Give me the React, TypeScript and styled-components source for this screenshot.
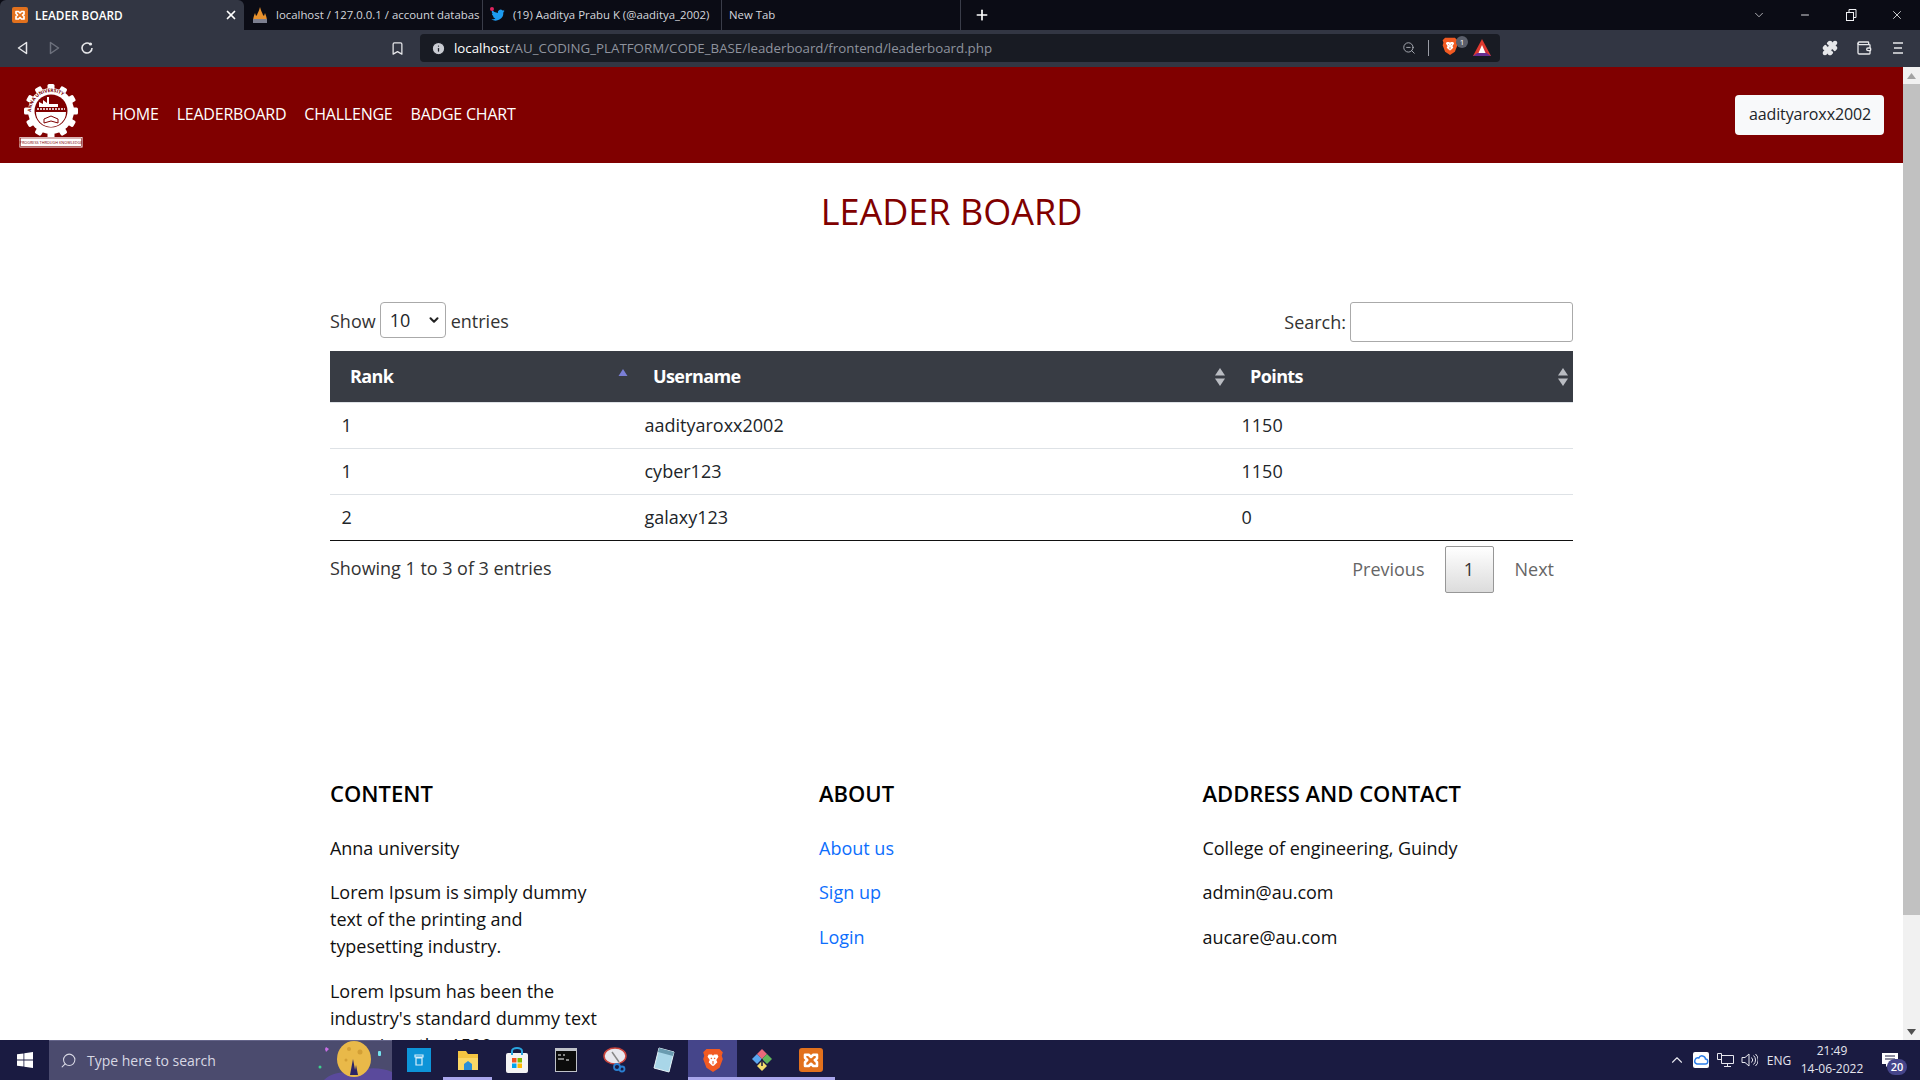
import React from 'react';
import styled, { createGlobalStyle } from 'styled-components';
import { ChevronDown, ChevronUp, Minus, X, Plus, Bookmark, ZoomOut, Puzzle, Wallet, Search, Info } from 'lucide-react';

const GlobalStyle = createGlobalStyle`
  html, body {
    margin: 0;
    padding: 0;
    overflow: hidden;
    background: #fff;
  }
  * { box-sizing: border-box; }
`;

const Screen = styled.div`
  width: 1920px;
  height: 1080px;
  display: flex;
  flex-direction: column;
  overflow: hidden;
  font-family: 'Open Sans', sans-serif;
`;

/* browser chrome */
const TabStrip = styled.div`
  height: 30px;
  flex: none;
  display: flex;
  align-items: stretch;
  background: #0b0c15;
  color: #d6d8de;
  font-family: 'Open Sans', sans-serif;
`;

const BrowserTab = styled.div<{ active?: boolean }>`
  width: ${p => (p.active ? 244 : 239)}px;
  display: flex;
  align-items: center;
  gap: 7px;
  padding: 0 6px 1px ${p => (p.active ? 12 : 7)}px;
  font-size: ${p => (p.active ? 11.8 : 11.4)}px;
  font-weight: ${p => (p.active ? 600 : 400)};
  color: ${p => (p.active ? '#fff' : '#d4d6dc')};
  background: ${p => (p.active ? '#323643' : 'transparent')};
  border-radius: ${p => (p.active ? '6px 6px 0 0' : '0')};
  border-right: ${p => (p.active ? 'none' : '1px solid #3a3d49')};
  white-space: nowrap;
  overflow: hidden;

  svg {
    flex: none;
  }
`;

const TabTitle = styled.span`
  flex: 1;
  white-space: nowrap;
`;

const NewTab = styled.div`
  width: 42px;
  display: flex;
  align-items: center;
  justify-content: center;
  color: #fff;
`;

const WindowControls = styled.div`
  margin-left: auto;
  display: flex;
  align-items: center;
  color: #f0f1f4;
`;

const WindowButton = styled.div`
  width: 46px;
  display: flex;
  justify-content: center;
`;

const Toolbar = styled.div`
  height: 37px;
  flex: none;
  display: flex;
  align-items: center;
  background: #323643;
  color: #e6e7ea;
  padding: 0 0 1px 15px;
`;

const NavIcons = styled.div`
  width: 375px;
  display: flex;
  align-items: center;
  gap: 15px;
`;

const BookmarkSlot = styled.div`
  width: 30px;
  display: flex;
  align-items: center;
`;

const UrlBar = styled.div`
  width: 1080px;
  height: 28px;
  background: #181b23;
  border-radius: 4px;
  display: flex;
  align-items: center;
  padding: 0 9px 0 11px;
  font-size: 13.3px;
  color: #8f939e;
`;

const UrlText = styled.span`
  margin-left: 8px;
  flex: 1;
  white-space: nowrap;
`;

const UrlHost = styled.span`
  color: #fff;
`;

const UrlDivider = styled.div`
  width: 1px;
  height: 16px;
  background: #9a9da6;
  margin: 0 12px 0 12px;
`;

const ShieldWrap = styled.div`
  position: relative;
  width: 22px;
  height: 22px;
  margin-right: 10px;
`;

const ShieldBadge = styled.span`
  position: absolute;
  top: -1px;
  right: -5px;
  width: 12px;
  height: 12px;
  border-radius: 50%;
  background: #5b5f6b;
  color: #fff;
  font-size: 8px;
  line-height: 12px;
  text-align: center;
`;

const ToolbarRight = styled.div`
  margin-left: auto;
  display: flex;
  align-items: center;
  gap: 18px;
  padding-right: 16px;
`;

const WalletGap = styled.div`
  display: flex;
  margin-right: 2px;
`;

/* page */
const Viewport = styled.div`
  flex: 1;
  min-height: 0;
  display: flex;
`;

const Page = styled.div`
  flex: 1;
  min-width: 0;
  overflow: hidden;
  background: #fff;
  color: #212529;
`;

const ScrollBar = styled.div`
  width: 17px;
  flex: none;
  background: #f1f1f1;
  display: flex;
  flex-direction: column;
  align-items: center;
`;

const ScrollArrow = styled.div`
  height: 17px;
  flex: none;
  display: flex;
  align-items: center;
  justify-content: center;
`;

const ScrollThumb = styled.div`
  width: 100%;
  height: 831px;
  background: #c1c1c1;
`;

const ScrollTrack = styled.div`
  flex: 1;
`;

const NavBar = styled.nav`
  height: 96px;
  background: #800000;
  display: flex;
  align-items: center;
  padding: 0 19px;
`;

const LogoSlot = styled.div`
  width: 64px;
  height: 64px;
  margin-right: 29px;
  margin-top: 1px;
`;

const NavLinks = styled.div`
  display: flex;
  gap: 18px;
  margin-top: -2px;
`;

const NavLink = styled.a`
  color: #fff;
  font-size: 16px;
  line-height: 24px;
  letter-spacing: -0.22px;
  white-space: nowrap;
`;

const UserButton = styled.button`
  margin-left: auto;
  width: 149px;
  height: 40px;
  background: #f8f9fa;
  border: none;
  border-radius: 4px;
  color: #212529;
  font-family: inherit;
  font-size: 16px;
  letter-spacing: -0.1px;
  padding: 0 0 2px 1px;
`;

const PageTitle = styled.h1`
  margin: 0;
  padding-top: 28px;
  height: 139px;
  text-align: center;
  font-size: 36px;
  line-height: 42px;
  font-weight: 400;
  color: #800000;
`;

const Container = styled.div`
  width: 1243px;
  margin-left: 330px;
`;

const TableControls = styled.div`
  height: 49px;
  display: flex;
  justify-content: space-between;
  align-items: flex-start;
  font-size: 18px;
  color: #333;
`;

const ShowEntries = styled.label`
  display: flex;
  align-items: center;
  gap: 4px;
  height: 36px;
  padding-top: 1px;
`;

const EntriesSelect = styled.div`
  width: 66px;
  height: 36px;
  margin: -1px 1px 0 0;
  border: 1px solid #aaa;
  border-radius: 4px;
  display: flex;
  align-items: center;
  justify-content: space-between;
  padding: 0 4px 0 9px;
  font-size: 18px;
  color: #212529;
`;

const SearchLabel = styled.label`
  display: flex;
  align-items: center;
  gap: 4px;
  height: 40px;
`;

const SearchInput = styled.input`
  width: 223px;
  height: 40px;
  border: 1px solid #aaa;
  border-radius: 3px;
  background: #fff;
`;

const Table = styled.table`
  width: 100%;
  border-collapse: collapse;
  table-layout: fixed;
  border-bottom: 1px solid #111;
`;

const HeadCell = styled.th<{ w: number }>`
  width: ${p => p.w}px;
  height: 51px;
  position: relative;
  padding: 0 0 1px 20px;
  background: #383c44;
  border-bottom: 1px solid #dee2e6;
  color: #fff;
  text-align: left;
  font-size: 18px;
  font-weight: 700;
  letter-spacing: -0.6px;
`;

const SortIcon = styled.span`
  position: absolute;
  top: 17px;
  right: 5px;
  display: block;
  line-height: 0;
`;

const Cell = styled.td`
  height: 46px;
  padding: 0 11.5px;
  font-size: 18px;
  color: #212529;
`;

const Row = styled.tr`
  & + & td {
    border-top: 1px solid #dee2e6;
  }
`;

const TableFooter = styled.div`
  display: flex;
  justify-content: space-between;
  padding-top: 5px;
  font-size: 18px;
  color: #333;
`;

const EntryCount = styled.div`
  padding-top: 9px;
  line-height: 27px;
  letter-spacing: -0.03px;
`;

const Pager = styled.div`
  display: flex;
  align-items: center;
  height: 47px;
`;

const PagerLink = styled.span<{ muted?: boolean }>`
  padding: 0 ${p => (p.muted ? 20 : 19)}px 0 ${p => (p.muted ? 0 : 21)}px;
  color: #666;
`;

const PagerCurrent = styled.span`
  width: 49px;
  height: 47px;
  border: 1px solid #979797;
  border-radius: 2px;
  background: linear-gradient(to bottom, #fff 0%, #dcdcdc 100%);
  display: flex;
  align-items: center;
  justify-content: center;
  color: #333;
`;

const Footer = styled.footer`
  display: grid;
  grid-template-columns: 489px 383.5px 1fr;
  margin-top: 184px;
`;

const FooterColumn = styled.div`
  display: flex;
  flex-direction: column;
`;

const FooterHeading = styled.h4`
  margin: 0 0 25px;
  font-size: 22px;
  line-height: 33px;
  font-weight: 600;
  color: #000;
`;

const FooterText = styled.p`
  margin: 0 0 17.5px;
  width: 290px;
  font-size: 18px;
  line-height: 27px;
  letter-spacing: -0.03px;
  color: #111;
`;

const FooterLink = styled.a`
  margin-bottom: 17.5px;
  font-size: 18px;
  line-height: 27px;
  color: #0d6efd;
`;

/* windows taskbar */
const Taskbar = styled.div`
  height: 40px;
  flex: none;
  display: flex;
  align-items: stretch;
  background: #1a1b41;
  color: #e8e8f0;
`;

const StartButton = styled.div`
  width: 49px;
  display: flex;
  align-items: center;
  justify-content: center;
`;

const SearchBox = styled.div`
  width: 343px;
  position: relative;
  display: flex;
  align-items: center;
  gap: 10px;
  padding-left: 11px;
  background: #4b4b6e;
  border-top: 1px solid #65658a;
  font-size: 14px;
  color: #d8d8e4;
  overflow: hidden;
`;

const MoonArt = styled.div`
  position: absolute;
  right: 0;
  bottom: 0;
  line-height: 0;
`;

const TaskIcons = styled.div`
  display: flex;
  align-items: stretch;
  margin-left: 2px;
`;

const TaskIcon = styled.div<{ open?: boolean; active?: boolean }>`
  width: 49px;
  display: flex;
  align-items: center;
  justify-content: center;
  background: ${p => (p.active ? '#45458a' : 'transparent')};
  border-bottom: 3px solid ${p => (p.open ? '#a9a6ec' : 'transparent')};
  padding-top: 3px;
`;

const Tray = styled.div`
  margin-left: auto;
  display: flex;
  align-items: center;
  padding-right: 7px;
  font-size: 12px;
  color: #e6e6ee;
`;

const TrayIcon = styled.div`
  width: 24px;
  display: flex;
  justify-content: center;
`;

const TrayLang = styled.div`
  width: 36px;
  text-align: center;
`;

const Clock = styled.div`
  width: 70px;
  text-align: center;
  line-height: 18px;
  white-space: nowrap;
`;

const NotifyWrap = styled.div`
  position: relative;
  width: 46px;
  display: flex;
  justify-content: center;
`;

const NotifyBadge = styled.span`
  position: absolute;
  top: 6px;
  right: 6px;
  width: 20px;
  height: 16px;
  border-radius: 8px;
  background: #45458a;
  color: #fff;
  font-size: 11px;
  font-weight: 600;
  line-height: 16px;
  text-align: center;
`;

/* drawings */
const XamppIcon = ({ size = 16 }: { size?: number }) => (
  <svg width={size} height={size} viewBox="0 0 16 16">
    <rect width="16" height="16" rx="2" fill="#e2711d" />
    <path d="M4 4.500h2.500L8 6l1.500-1.500H12v2.500L10.500 8 12 9.500V12H9.500L8 10.500 6.500 12H4V9.500L5.500 8 4 6.500z" fill="none" stroke="#fff" strokeWidth="1.700" strokeLinejoin="round" />
  </svg>
);

const BraveIcon = ({ size = 18 }: { size?: number }) => (
  <svg width={size} height={size} viewBox="0 0 20 22">
    <path d="M4 1h12l3 3-1 3 1 3-3 8-6 4-6-4-3-8 1-3-1-3z" fill="#f15a22" />
    <path d="M6 6h3l1 1 1-1h3l1 2-2 3 1 2-3 3-1 .5L9 16l-3-3 1-2-2-3z" fill="#fff" />
    <path d="M8 9l1 1M12 9l-1 1M10 12v3" stroke="#f15a22" strokeWidth="1" />
  </svg>
);

const BatIcon = () => (
  <svg width="18" height="18" viewBox="0 0 18 18">
    <path d="M9 0l9 17H0z" fill="#e0392f" />
    <path d="M0 17l4.500-3h9l4.500 3z" fill="#662d91" />
    <path d="M13.500 14l-3-6 4.500 7z" fill="#9e1f63" />
    <path d="M9 6l3.500 8h-7z" fill="#fff" />
  </svg>
);

const GraphIcon = () => (
  <svg width="18" height="18" viewBox="0 0 18 18">
    <path d="M9 1c1 4 2 5 3 8l1 1 1-3c1 3 2 5 2 8H2c0-3 1-5 2-8l1 3 1-1c1-3 2-4 3-8z" fill="#e8912d" />
    <rect x="2" y="13" width="14" height="4" fill="#7c7f8f" />
  </svg>
);

const TwitterIcon = () => (
  <svg width="16" height="16" viewBox="0 0 24 24">
    <path fill="#1d9bf0" d="M22 5.800a8 8 0 0 1-2.400.6 4 4 0 0 0 1.800-2.200 8 8 0 0 1-2.600 1 4.100 4.100 0 0 0-7 3.700A11.600 11.600 0 0 1 3.400 4.700a4.100 4.100 0 0 0 1.300 5.500 4 4 0 0 1-1.900-.5c0 2 1.400 3.700 3.300 4.100a4 4 0 0 1-1.800.1 4.100 4.100 0 0 0 3.800 2.800A8.200 8.200 0 0 1 2 18.400 11.600 11.600 0 0 0 20 8.100 8 8 0 0 0 22 5.800z" />
    <circle cx="3" cy="3" r="3" fill="#e0245e" />
  </svg>
);

const gearTeeth = Array.from({ length: 12 }, (_, i) => i * 30);

const UniversityLogo = () => (
  <svg width="64" height="64" viewBox="0 0 64 64">
    <defs>
      <path id="logoArc" d="M12 28a20 20 0 0 1 40 0" />
    </defs>
    {gearTeeth.map(deg => (
      <rect key={deg} x="28.500" y="0" width="7" height="9" rx="1.500" fill="#fff" transform={`rotate(${deg} 32 27)`} />
    ))}
    <circle cx="32" cy="27" r="23" fill="#fff" />
    <circle cx="32" cy="27" r="16.500" fill="#800000" />
    <text fontSize="4.800" fontWeight="700" fill="#800000" fontFamily="'Open Sans', sans-serif">
      <textPath href="#logoArc">ANNA UNIVERSITY</textPath>
    </text>
    <path d="M20 23v-5l4 2v-4l4 3v-6h2v7h9v3z" fill="#fff" />
    <path d="M18 25h28" stroke="#fff" strokeWidth="1.500" strokeDasharray="2 1" />
    <path d="M17 28a15 15 0 0 0 30 0z" fill="#fff" />
    <path d="M25 35l7-3 7 3v4l-7-2-7 2z" fill="none" stroke="#800000" strokeWidth="1" />
    <rect x="0.500" y="53" width="63" height="10.500" fill="#fff" />
    <rect x="1.500" y="54" width="61" height="8.500" fill="none" stroke="#800000" strokeWidth="0.600" />
    <text x="32" y="59.800" textAnchor="middle" fontSize="3.800" fill="#800000" fontFamily="'Open Sans', sans-serif">
      PROGRESS THROUGH KNOWLEDGE
    </text>
  </svg>
);

const SortArrows = ({ asc }: { asc?: boolean }) => (
  <svg width="10" height="18" viewBox="0 0 10 18">
    {asc ? (
      <path d="M5 1l4.500 7H.5z" fill="#7a7fd6" />
    ) : (
      <>
        <path d="M5 0l5 7.500H0z" fill="#b9bcc2" />
        <path d="M5 18l5-7.500H0z" fill="#b9bcc2" />
      </>
    )}
  </svg>
);

const MoonScene = () => (
  <svg width="76" height="40" viewBox="0 0 76 40">
    <path d="M8 40c8-8 20-8 28-7 14-6 28-6 40-1v8z" fill="#5a4a9c" />
    <ellipse cx="38" cy="19" rx="17" ry="18" fill="#e9b949" />
    <circle cx="33" cy="9" r="2" fill="#d39f35" />
    <circle cx="44" cy="12" r="2.500" fill="#d39f35" />
    <circle cx="30" cy="20" r="1.500" fill="#d39f35" />
    <path d="M34 35l3-16 3 16zM38 35l2-10 2 10z" fill="#2b2467" />
    <path d="M10 7l3 2-3 3-1-3z" fill="#c86ee6" />
    <circle cx="4" cy="27" r="1.500" fill="#3ecf8e" />
    <rect x="62" y="11" width="3" height="5" rx="1" fill="#74e3ee" />
  </svg>
);

const rows = [
  { rank: 1, name: 'aadityaroxx2002', points: 1150 },
  { rank: 1, name: 'cyber123', points: 1150 },
  { rank: 2, name: 'galaxy123', points: 0 },
];

const App: React.FC = () => (
  <Screen>
    <GlobalStyle />
    <TabStrip>
      <BrowserTab active>
        <XamppIcon />
        <TabTitle>LEADER BOARD</TabTitle>
        <X size={14} color="#fff" strokeWidth={3} />
      </BrowserTab>
      <BrowserTab>
        <GraphIcon />
        <TabTitle>localhost / 127.0.0.1 / account databas</TabTitle>
      </BrowserTab>
      <BrowserTab>
        <TwitterIcon />
        <TabTitle>(19) Aaditya Prabu K (@aaditya_2002)</TabTitle>
      </BrowserTab>
      <BrowserTab>
        <TabTitle>New Tab</TabTitle>
      </BrowserTab>
      <NewTab>
        <Plus size={16} strokeWidth={2.500} />
      </NewTab>
      <WindowControls>
        <WindowButton><ChevronDown size={14} strokeWidth={1.200} /></WindowButton>
        <WindowButton><Minus size={12} strokeWidth={1.800} /></WindowButton>
        <WindowButton>
          <svg width="12" height="12" viewBox="0 0 12 12" fill="none" stroke="currentColor">
            <rect x="1.500" y="3.500" width="7" height="8" />
            <path d="M4 3.500V.5h7v8H8.500" />
          </svg>
        </WindowButton>
        <WindowButton><X size={14} strokeWidth={1.400} /></WindowButton>
      </WindowControls>
    </TabStrip>

    <Toolbar>
      <NavIcons>
        <svg width="16" height="16" viewBox="0 0 16 16" fill="none" stroke="#e6e7ea" strokeWidth="1.500" strokeLinejoin="round">
          <path d="M11.500 2.500v11L3.500 8z" />
        </svg>
        <svg width="16" height="16" viewBox="0 0 16 16" fill="none" stroke="#6d717d" strokeWidth="1.500" strokeLinejoin="round">
          <path d="M4.500 2.500v11l8-5.500z" />
        </svg>
        <svg width="16" height="16" viewBox="0 0 16 16" fill="none" stroke="#e6e7ea" strokeWidth="1.600" style={{ marginLeft: 2 }}>
          <path d="M13 8a5 5 0 1 1-2-4" />
          <circle cx="11.500" cy="4" r="1.600" fill="#e6e7ea" stroke="none" />
        </svg>
      </NavIcons>
      <BookmarkSlot>
        <Bookmark size={15} strokeWidth={2} />
      </BookmarkSlot>
      <UrlBar>
        <Info size={15} fill="#c9cbd2" color="#181b23" />
        <UrlText>
          <UrlHost>localhost</UrlHost>/AU_CODING_PLATFORM/CODE_BASE/leaderboard/frontend/leaderboard.php
        </UrlText>
        <ZoomOut size={14} color="#b4b7bf" strokeWidth={1.500} />
        <UrlDivider />
        <ShieldWrap>
          <BraveIcon />
          <ShieldBadge>1</ShieldBadge>
        </ShieldWrap>
        <BatIcon />
      </UrlBar>
      <ToolbarRight>
        <Puzzle size={16} fill="#e6e7ea" />
        <WalletGap><Wallet size={16} /></WalletGap>
        <svg width="12" height="14" viewBox="0 0 12 14" stroke="#e6e7ea" strokeWidth="1.600">
          <path d="M1 2h10M2 7h8M1 12h10" />
        </svg>
      </ToolbarRight>
    </Toolbar>

    <Viewport>
      <Page>
        <NavBar>
          <LogoSlot><UniversityLogo /></LogoSlot>
          <NavLinks>
            <NavLink>HOME</NavLink>
            <NavLink>LEADERBOARD</NavLink>
            <NavLink>CHALLENGE</NavLink>
            <NavLink>BADGE CHART</NavLink>
          </NavLinks>
          <UserButton>aadityaroxx2002</UserButton>
        </NavBar>

        <PageTitle>LEADER BOARD</PageTitle>

        <Container>
          <TableControls>
            <ShowEntries>
              Show
              <EntriesSelect>
                10
                <ChevronDown size={14} strokeWidth={3.500} color="#222" />
              </EntriesSelect>
              entries
            </ShowEntries>
            <SearchLabel>
              Search:
              <SearchInput />
            </SearchLabel>
          </TableControls>

          <Table>
            <thead>
              <tr>
                <HeadCell w={303}>Rank<SortIcon><SortArrows asc /></SortIcon></HeadCell>
                <HeadCell w={597}>Username<SortIcon><SortArrows /></SortIcon></HeadCell>
                <HeadCell w={343}>Points<SortIcon><SortArrows /></SortIcon></HeadCell>
              </tr>
            </thead>
            <tbody>
              {rows.map(r => (
                <Row key={r.name}>
                  <Cell>{r.rank}</Cell>
                  <Cell>{r.name}</Cell>
                  <Cell>{r.points}</Cell>
                </Row>
              ))}
            </tbody>
          </Table>

          <TableFooter>
            <EntryCount>Showing 1 to 3 of 3 entries</EntryCount>
            <Pager>
              <PagerLink muted>Previous</PagerLink>
              <PagerCurrent>1</PagerCurrent>
              <PagerLink>Next</PagerLink>
            </Pager>
          </TableFooter>

          <Footer>
            <FooterColumn>
              <FooterHeading>CONTENT</FooterHeading>
              <FooterText>Anna university</FooterText>
              <FooterText>Lorem Ipsum is simply dummy text of the printing and typesetting industry.</FooterText>
              <FooterText>Lorem Ipsum has been the industry's standard dummy text ever since the 1500s</FooterText>
            </FooterColumn>
            <FooterColumn>
              <FooterHeading>ABOUT</FooterHeading>
              <FooterLink>About us</FooterLink>
              <FooterLink>Sign up</FooterLink>
              <FooterLink>Login</FooterLink>
            </FooterColumn>
            <FooterColumn>
              <FooterHeading>ADDRESS AND CONTACT</FooterHeading>
              <FooterText>College of engineering, Guindy</FooterText>
              <FooterText>admin@au.com</FooterText>
              <FooterText>aucare@au.com</FooterText>
            </FooterColumn>
          </Footer>
        </Container>
      </Page>
      <ScrollBar>
        <ScrollArrow><svg width="9" height="6" viewBox="0 0 9 6"><path d="M4.500 0L9 6H0z" fill="#a3a3a3" /></svg></ScrollArrow>
        <ScrollThumb />
        <ScrollTrack />
        <ScrollArrow><svg width="9" height="6" viewBox="0 0 9 6"><path d="M4.500 6L9 0H0z" fill="#505050" /></svg></ScrollArrow>
      </ScrollBar>
    </Viewport>

    <Taskbar>
      <StartButton>
        <svg width="16" height="16" viewBox="0 0 16 16" fill="#fff">
          <path d="M0 2.300l6.500-.9v6.200H0zM7.300 1.300L16 0v7.600H7.300zM0 8.400h6.500v6.200L0 13.700zM7.300 8.400H16V16l-8.700-1.300z" />
        </svg>
      </StartButton>
      <SearchBox>
        <Search size={17} strokeWidth={1.500} style={{ transform: 'scaleX(-1)' }} />
        Type here to search
        <MoonArt><MoonScene /></MoonArt>
      </SearchBox>
      <TaskIcons>
        <TaskIcon>
          <svg width="24" height="24" viewBox="0 0 24 24">
            <rect width="24" height="24" fill="#0d94d8" />
            <path d="M8 7h8v2H8zM9 10h6v7H9z" fill="none" stroke="#d8eefa" strokeWidth="1.200" />
          </svg>
        </TaskIcon>
        <TaskIcon open>
          <svg width="24" height="24" viewBox="0 0 24 24">
            <path d="M2 3h8l2 3h10v16H2z" fill="#f4c542" />
            <path d="M2 10h20v12H2z" fill="#fbd865" />
            <path d="M8 22v-6l4-3 4 3v6z" fill="#2a8fd8" />
          </svg>
        </TaskIcon>
        <TaskIcon>
          <svg width="24" height="26" viewBox="0 0 24 26">
            <rect x="1" y="6" width="22" height="20" rx="2" fill="#f4f4f4" />
            <path d="M7 8V4a5 3 0 0 1 10 0v4" fill="none" stroke="#2aa6e0" strokeWidth="2" />
            <rect x="7" y="11" width="4.500" height="4.500" fill="#f25022" />
            <rect x="12.500" y="11" width="4.500" height="4.500" fill="#7fba00" />
            <rect x="7" y="16.500" width="4.500" height="4.500" fill="#00a4ef" />
            <rect x="12.500" y="16.500" width="4.500" height="4.500" fill="#ffb900" />
          </svg>
        </TaskIcon>
        <TaskIcon>
          <svg width="22" height="24" viewBox="0 0 22 24">
            <rect width="22" height="24" fill="#bfc2c9" />
            <rect x="1" y="3" width="20" height="20" fill="#0c0c0c" />
            <path d="M3 7h3M8 7h2M3 11h6M11 12h3" stroke="#fff" strokeWidth="1.200" />
          </svg>
        </TaskIcon>
        <TaskIcon>
          <svg width="24" height="26" viewBox="0 0 24 26">
            <ellipse cx="12" cy="9" rx="11" ry="8" fill="#e8e8ee" stroke="#c8443c" strokeWidth="1.500" />
            <path d="M9 5l7 10" stroke="#888" strokeWidth="1.500" />
            <circle cx="14" cy="20" r="3" fill="none" stroke="#2a7fd0" strokeWidth="1.800" />
            <circle cx="19" cy="22" r="2.500" fill="none" stroke="#2a7fd0" strokeWidth="1.800" />
          </svg>
        </TaskIcon>
        <TaskIcon>
          <svg width="22" height="26" viewBox="0 0 22 26">
            <path d="M6 1l15 4-5 20L1 21z" fill="#a9d6e8" stroke="#e8f4f8" />
            <path d="M6 1l15 4-1 4L5 5z" fill="#6a9bb0" />
          </svg>
        </TaskIcon>
        <TaskIcon open active>
          <BraveIcon size={24} />
        </TaskIcon>
        <TaskIcon open>
          <svg width="24" height="24" viewBox="0 0 24 24">
            <path d="M7 6l5 5-5 5-5-5z" fill="#5aa7f0" />
            <path d="M12 1l5 5-5 5-5-5z" fill="#e8697a" />
            <path d="M17 6l5 5-5 5-5-5z" fill="#62b65a" />
            <path d="M12 13l5 5-5 5-5-5z" fill="#f4dd6c" />
            <path d="M12 11v7" stroke="#1a1b41" strokeWidth="1.500" />
          </svg>
        </TaskIcon>
        <TaskIcon open>
          <XamppIcon size={24} />
        </TaskIcon>
      </TaskIcons>
      <Tray>
        <TrayIcon><ChevronUp size={18} strokeWidth={1.500} /></TrayIcon>
        <TrayIcon>
          <svg width="16" height="16" viewBox="0 0 16 16">
            <rect width="16" height="16" rx="2" fill="#fff" />
            <path d="M4 12h8a2.500 2.500 0 0 0 .5-5 3.500 3.500 0 0 0-6.700-1A3 3 0 0 0 4 12z" fill="none" stroke="#2b7de9" strokeWidth="1.500" />
          </svg>
        </TrayIcon>
        <TrayIcon>
          <svg width="17" height="16" viewBox="0 0 17 16" fill="none" stroke="#e6e6ee">
            <path d="M4.500 3.500h12v8h-12zM10.500 11.500v3M7 14.500h7M.5 1.500h4v6h-4z" />
          </svg>
        </TrayIcon>
        <TrayIcon>
          <svg width="17" height="16" viewBox="0 0 17 16" fill="none" stroke="#e6e6ee">
            <path d="M1 5.500h3l4-3.500v12l-4-3.500H1zM10.500 5.500a3.500 3.500 0 0 1 0 5M12.500 3.500a6 6 0 0 1 0 9M14.500 2a8 8 0 0 1 0 12" />
          </svg>
        </TrayIcon>
        <TrayLang>ENG</TrayLang>
        <Clock>
          21:49
          <br />
          14-06-2022
        </Clock>
        <NotifyWrap>
          <svg width="16" height="14" viewBox="0 0 16 14">
            <path d="M0 0h16v11H7l-3 3v-3H0z" fill="#fff" />
            <path d="M3 3h10M3 6h10" stroke="#1a1b41" />
          </svg>
          <NotifyBadge>20</NotifyBadge>
        </NotifyWrap>
      </Tray>
    </Taskbar>
  </Screen>
);

export default App;
